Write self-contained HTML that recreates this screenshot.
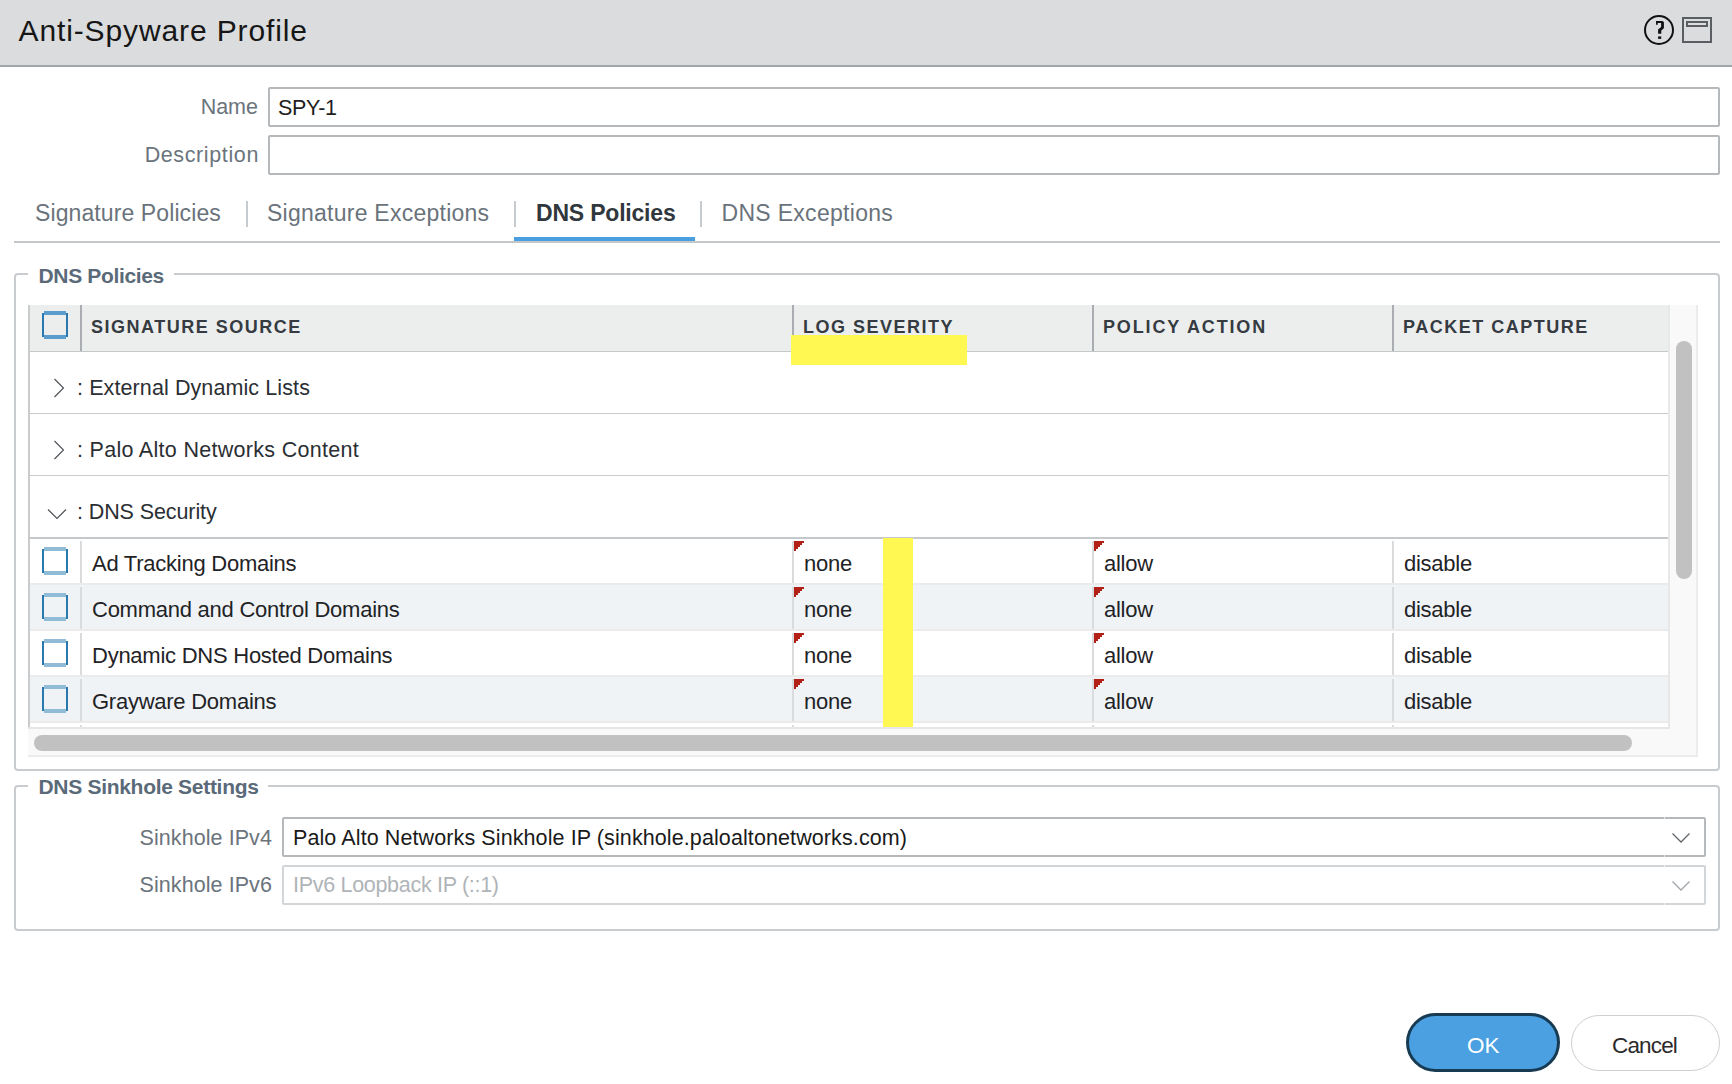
<!DOCTYPE html>
<html><head><meta charset="utf-8"><title>Anti-Spyware Profile</title>
<style>
html,body{margin:0;padding:0;background:#fff;width:1732px;height:1084px;overflow:hidden;}
body{position:relative;font-family:"Liberation Sans",sans-serif;}
.t{position:absolute;white-space:pre;}
.r{position:absolute;}
</style></head><body>
<div class="r" style="left:0px;top:0px;width:1732px;height:65px;background:#dbdcde;"></div>
<div class="r" style="left:0px;top:65px;width:1732px;height:2px;background:#a1a5a8;"></div>
<div class="t" style="left:18.5px;top:15.60px;font-size:30px;line-height:30px;color:#161616;font-weight:400;letter-spacing:0.88px;">Anti-Spyware Profile</div>
<svg class="r" style="left:1640px;top:10px" width="80" height="40" viewBox="1640 10 80 40">
<circle cx="1659" cy="30" r="14" fill="none" stroke="#111" stroke-width="2"/>
<path d="M1656 21 H1662.6 L1663.9 22.3 V28.2 L1661.3 30.6 V33.7 H1658.1 V29.4 L1661.1 26.9 V23.1 H1657.7 V24.7 H1656 Z" fill="#111"/>
<rect x="1658.1" y="36.4" width="3.1" height="2.5" fill="#111"/>
<rect x="1683" y="18" width="28" height="24" fill="none" stroke="#5a5e62" stroke-width="2"/>
<rect x="1687" y="22" width="20" height="4" fill="none" stroke="#5a5e62" stroke-width="2"/>
</svg>
<div class="t" style="right:1474px;text-align:right;top:97.30px;font-size:21.5px;line-height:21.5px;color:#6b747c;font-weight:400;letter-spacing:0px;">Name</div>
<div class="r" style="left:268px;top:87px;width:1452px;height:40px;border:2px solid #b5b9bc;border-radius:2px;box-sizing:border-box;"></div>
<div class="t" style="left:278px;top:98.10px;font-size:21.5px;line-height:21.5px;color:#1e1e1e;font-weight:400;letter-spacing:-0.3px;">SPY-1</div>
<div class="t" style="right:1473px;text-align:right;top:145.30px;font-size:21.5px;line-height:21.5px;color:#6b747c;font-weight:400;letter-spacing:0.62px;">Description</div>
<div class="r" style="left:268px;top:135px;width:1452px;height:40px;border:2px solid #b5b9bc;border-radius:2px;box-sizing:border-box;"></div>
<div class="t" style="left:35px;top:201.73px;font-size:23px;line-height:23px;color:#6a737b;font-weight:400;letter-spacing:0.1px;">Signature Policies</div>
<div class="r" style="left:246px;top:201px;width:2px;height:26px;background:#c6cbcf;"></div>
<div class="t" style="left:267px;top:201.73px;font-size:23px;line-height:23px;color:#6a737b;font-weight:400;letter-spacing:0.25px;">Signature Exceptions</div>
<div class="r" style="left:514px;top:201px;width:2px;height:26px;background:#c6cbcf;"></div>
<div class="t" style="left:536px;top:201.73px;font-size:23px;line-height:23px;color:#30373d;font-weight:700;letter-spacing:-0.2px;">DNS Policies</div>
<div class="r" style="left:700px;top:201px;width:2px;height:26px;background:#c6cbcf;"></div>
<div class="t" style="left:721.5px;top:201.73px;font-size:23px;line-height:23px;color:#6a737b;font-weight:400;letter-spacing:0.3px;">DNS Exceptions</div>
<div class="r" style="left:14px;top:241px;width:1706px;height:2px;background:#c4c7ca;"></div>
<div class="r" style="left:514px;top:237px;width:181px;height:4px;background:#4a9fe0;"></div>
<div class="r" style="left:14px;top:273px;width:1706px;height:498px;border:2px solid #c9cccf;border-radius:4px;box-sizing:border-box;"></div>
<div class="r" style="left:28px;top:272px;width:146px;height:4px;background:#fff;"></div>
<div class="t" style="left:38.5px;top:265.22px;font-size:21px;line-height:21px;color:#5a6a79;font-weight:700;letter-spacing:-0.35px;">DNS Policies</div>
<div class="r" style="left:28px;top:305px;width:1670px;height:452px;background:#f9f9f9;border-right:2px solid #ececec;border-bottom:2px solid #ebebeb;box-sizing:border-box;"></div>
<div class="r" style="left:29px;top:305px;width:1640px;height:46px;background:#eceeee;"></div>
<div class="r" style="left:29px;top:351px;width:1640px;height:2px;background:#c6c9cc;"></div>
<div class="r" style="left:28px;top:305px;width:2px;height:422px;background:#c9cbcd;"></div>
<div class="r" style="left:80px;top:305px;width:2px;height:46px;background:#a9adb1;"></div>
<div class="r" style="left:792px;top:305px;width:2px;height:46px;background:#a9adb1;"></div>
<div class="r" style="left:1092px;top:305px;width:2px;height:46px;background:#a9adb1;"></div>
<div class="r" style="left:1392px;top:305px;width:2px;height:46px;background:#a9adb1;"></div>
<div class="r" style="left:42px;top:312.5px;width:2px;height:24.0px;background:#2a78b0;"></div>
<div class="r" style="left:66px;top:312.5px;width:2px;height:24.0px;background:#2a78b0;"></div>
<div class="r" style="left:44px;top:311px;width:22px;height:4px;background:#5a9ccd;"></div>
<div class="r" style="left:44px;top:335px;width:22px;height:4px;background:#5a9ccd;"></div>
<div class="t" style="left:91px;top:317.56px;font-size:18px;line-height:18px;color:#353b41;font-weight:700;letter-spacing:1.5px;">SIGNATURE SOURCE</div>
<div class="t" style="left:803px;top:317.56px;font-size:18px;line-height:18px;color:#353b41;font-weight:700;letter-spacing:1.5px;">LOG SEVERITY</div>
<div class="t" style="left:1103px;top:317.56px;font-size:18px;line-height:18px;color:#353b41;font-weight:700;letter-spacing:1.85px;">POLICY ACTION</div>
<div class="t" style="left:1403px;top:317.56px;font-size:18px;line-height:18px;color:#353b41;font-weight:700;letter-spacing:1.5px;">PACKET CAPTURE</div>
<div class="r" style="left:30px;top:352px;width:1639px;height:61px;background:#fff;"></div>
<div class="r" style="left:29px;top:413px;width:1640px;height:2px;background:#c9ccce;"></div>
<svg class="r" style="left:50px;top:376px" width="20" height="22"><path d="M4.5 3 L13.5 12 L4.5 21" fill="none" stroke="#4a4f54" stroke-width="1.1"/></svg>
<div class="t" style="left:77px;top:378.10px;font-size:21.5px;line-height:21.5px;color:#2b2f33;font-weight:400;letter-spacing:0.1px;">: External Dynamic Lists</div>
<div class="r" style="left:30px;top:414px;width:1639px;height:61px;background:#fff;"></div>
<div class="r" style="left:29px;top:475px;width:1640px;height:2px;background:#c9ccce;"></div>
<svg class="r" style="left:50px;top:438px" width="20" height="22"><path d="M4.5 3 L13.5 12 L4.5 21" fill="none" stroke="#4a4f54" stroke-width="1.1"/></svg>
<div class="t" style="left:77px;top:440.10px;font-size:21.5px;line-height:21.5px;color:#2b2f33;font-weight:400;letter-spacing:0.3px;">: Palo Alto Networks Content</div>
<div class="r" style="left:30px;top:476px;width:1639px;height:61px;background:#fff;"></div>
<div class="r" style="left:29px;top:537px;width:1640px;height:2px;background:#c9ccce;"></div>
<svg class="r" style="left:45px;top:507px" width="24" height="16"><path d="M3 2.5 L12 11.5 L21 2.5" fill="none" stroke="#4a4f54" stroke-width="1.1"/></svg>
<div class="t" style="left:77px;top:502.10px;font-size:21.5px;line-height:21.5px;color:#2b2f33;font-weight:400;letter-spacing:-0.1px;">: DNS Security</div>
<div class="r" style="left:30px;top:539px;width:1638px;height:44px;background:#ffffff;"></div>
<div class="r" style="left:30px;top:583px;width:1638px;height:2px;background:#ebebeb;"></div>
<div class="r" style="left:80px;top:541px;width:2px;height:42px;background:#d9dbdd;"></div>
<div class="r" style="left:792px;top:541px;width:2px;height:42px;background:#d9dbdd;"></div>
<div class="r" style="left:1092px;top:541px;width:2px;height:42px;background:#d9dbdd;"></div>
<div class="r" style="left:1392px;top:541px;width:2px;height:42px;background:#d9dbdd;"></div>
<div class="r" style="left:42px;top:548.5px;width:2px;height:24.0px;background:#2a78b0;"></div>
<div class="r" style="left:66px;top:548.5px;width:2px;height:24.0px;background:#2a78b0;"></div>
<div class="r" style="left:44px;top:547px;width:22px;height:4px;background:#90bcd8;"></div>
<div class="r" style="left:44px;top:571px;width:22px;height:4px;background:#90bcd8;"></div>
<div class="t" style="left:92px;top:553.38px;font-size:22px;line-height:22px;color:#1f2326;font-weight:400;letter-spacing:-0.25px;">Ad Tracking Domains</div>
<svg class="r" style="left:794px;top:541px" width="10" height="10"><path d="M0 0 H10 V2 H8 V4 H6 V6 H4 V8 H2 V10 H0 Z" fill="#b22016" shape-rendering="crispEdges"/></svg>
<div class="t" style="left:804px;top:553.38px;font-size:22px;line-height:22px;color:#1f2326;font-weight:400;letter-spacing:-0.25px;">none</div>
<svg class="r" style="left:1094px;top:541px" width="10" height="10"><path d="M0 0 H10 V2 H8 V4 H6 V6 H4 V8 H2 V10 H0 Z" fill="#b22016" shape-rendering="crispEdges"/></svg>
<div class="t" style="left:1104px;top:553.38px;font-size:22px;line-height:22px;color:#1f2326;font-weight:400;letter-spacing:-0.25px;">allow</div>
<div class="t" style="left:1404px;top:553.38px;font-size:22px;line-height:22px;color:#1f2326;font-weight:400;letter-spacing:-0.25px;">disable</div>
<div class="r" style="left:30px;top:585px;width:1638px;height:44px;background:#eff3f6;"></div>
<div class="r" style="left:30px;top:629px;width:1638px;height:2px;background:#ebebeb;"></div>
<div class="r" style="left:80px;top:587px;width:2px;height:42px;background:#d9dbdd;"></div>
<div class="r" style="left:792px;top:587px;width:2px;height:42px;background:#d9dbdd;"></div>
<div class="r" style="left:1092px;top:587px;width:2px;height:42px;background:#d9dbdd;"></div>
<div class="r" style="left:1392px;top:587px;width:2px;height:42px;background:#d9dbdd;"></div>
<div class="r" style="left:42px;top:594.5px;width:2px;height:24.0px;background:#2a78b0;"></div>
<div class="r" style="left:66px;top:594.5px;width:2px;height:24.0px;background:#2a78b0;"></div>
<div class="r" style="left:44px;top:593px;width:22px;height:4px;background:#90bcd8;"></div>
<div class="r" style="left:44px;top:617px;width:22px;height:4px;background:#90bcd8;"></div>
<div class="t" style="left:92px;top:599.38px;font-size:22px;line-height:22px;color:#1f2326;font-weight:400;letter-spacing:-0.25px;">Command and Control Domains</div>
<svg class="r" style="left:794px;top:587px" width="10" height="10"><path d="M0 0 H10 V2 H8 V4 H6 V6 H4 V8 H2 V10 H0 Z" fill="#b22016" shape-rendering="crispEdges"/></svg>
<div class="t" style="left:804px;top:599.38px;font-size:22px;line-height:22px;color:#1f2326;font-weight:400;letter-spacing:-0.25px;">none</div>
<svg class="r" style="left:1094px;top:587px" width="10" height="10"><path d="M0 0 H10 V2 H8 V4 H6 V6 H4 V8 H2 V10 H0 Z" fill="#b22016" shape-rendering="crispEdges"/></svg>
<div class="t" style="left:1104px;top:599.38px;font-size:22px;line-height:22px;color:#1f2326;font-weight:400;letter-spacing:-0.25px;">allow</div>
<div class="t" style="left:1404px;top:599.38px;font-size:22px;line-height:22px;color:#1f2326;font-weight:400;letter-spacing:-0.25px;">disable</div>
<div class="r" style="left:30px;top:631px;width:1638px;height:44px;background:#ffffff;"></div>
<div class="r" style="left:30px;top:675px;width:1638px;height:2px;background:#ebebeb;"></div>
<div class="r" style="left:80px;top:633px;width:2px;height:42px;background:#d9dbdd;"></div>
<div class="r" style="left:792px;top:633px;width:2px;height:42px;background:#d9dbdd;"></div>
<div class="r" style="left:1092px;top:633px;width:2px;height:42px;background:#d9dbdd;"></div>
<div class="r" style="left:1392px;top:633px;width:2px;height:42px;background:#d9dbdd;"></div>
<div class="r" style="left:42px;top:640.5px;width:2px;height:24.0px;background:#2a78b0;"></div>
<div class="r" style="left:66px;top:640.5px;width:2px;height:24.0px;background:#2a78b0;"></div>
<div class="r" style="left:44px;top:639px;width:22px;height:4px;background:#90bcd8;"></div>
<div class="r" style="left:44px;top:663px;width:22px;height:4px;background:#90bcd8;"></div>
<div class="t" style="left:92px;top:645.38px;font-size:22px;line-height:22px;color:#1f2326;font-weight:400;letter-spacing:-0.25px;">Dynamic DNS Hosted Domains</div>
<svg class="r" style="left:794px;top:633px" width="10" height="10"><path d="M0 0 H10 V2 H8 V4 H6 V6 H4 V8 H2 V10 H0 Z" fill="#b22016" shape-rendering="crispEdges"/></svg>
<div class="t" style="left:804px;top:645.38px;font-size:22px;line-height:22px;color:#1f2326;font-weight:400;letter-spacing:-0.25px;">none</div>
<svg class="r" style="left:1094px;top:633px" width="10" height="10"><path d="M0 0 H10 V2 H8 V4 H6 V6 H4 V8 H2 V10 H0 Z" fill="#b22016" shape-rendering="crispEdges"/></svg>
<div class="t" style="left:1104px;top:645.38px;font-size:22px;line-height:22px;color:#1f2326;font-weight:400;letter-spacing:-0.25px;">allow</div>
<div class="t" style="left:1404px;top:645.38px;font-size:22px;line-height:22px;color:#1f2326;font-weight:400;letter-spacing:-0.25px;">disable</div>
<div class="r" style="left:30px;top:677px;width:1638px;height:44px;background:#eff3f6;"></div>
<div class="r" style="left:30px;top:721px;width:1638px;height:2px;background:#ebebeb;"></div>
<div class="r" style="left:80px;top:679px;width:2px;height:42px;background:#d9dbdd;"></div>
<div class="r" style="left:792px;top:679px;width:2px;height:42px;background:#d9dbdd;"></div>
<div class="r" style="left:1092px;top:679px;width:2px;height:42px;background:#d9dbdd;"></div>
<div class="r" style="left:1392px;top:679px;width:2px;height:42px;background:#d9dbdd;"></div>
<div class="r" style="left:42px;top:686.5px;width:2px;height:24.0px;background:#2a78b0;"></div>
<div class="r" style="left:66px;top:686.5px;width:2px;height:24.0px;background:#2a78b0;"></div>
<div class="r" style="left:44px;top:685px;width:22px;height:4px;background:#90bcd8;"></div>
<div class="r" style="left:44px;top:709px;width:22px;height:4px;background:#90bcd8;"></div>
<div class="t" style="left:92px;top:691.38px;font-size:22px;line-height:22px;color:#1f2326;font-weight:400;letter-spacing:-0.25px;">Grayware Domains</div>
<svg class="r" style="left:794px;top:679px" width="10" height="10"><path d="M0 0 H10 V2 H8 V4 H6 V6 H4 V8 H2 V10 H0 Z" fill="#b22016" shape-rendering="crispEdges"/></svg>
<div class="t" style="left:804px;top:691.38px;font-size:22px;line-height:22px;color:#1f2326;font-weight:400;letter-spacing:-0.25px;">none</div>
<svg class="r" style="left:1094px;top:679px" width="10" height="10"><path d="M0 0 H10 V2 H8 V4 H6 V6 H4 V8 H2 V10 H0 Z" fill="#b22016" shape-rendering="crispEdges"/></svg>
<div class="t" style="left:1104px;top:691.38px;font-size:22px;line-height:22px;color:#1f2326;font-weight:400;letter-spacing:-0.25px;">allow</div>
<div class="t" style="left:1404px;top:691.38px;font-size:22px;line-height:22px;color:#1f2326;font-weight:400;letter-spacing:-0.25px;">disable</div>
<div class="r" style="left:30px;top:723px;width:1638px;height:4px;background:#fff;"></div>
<div class="r" style="left:80px;top:725px;width:2px;height:2px;background:#d9dbdd;"></div>
<div class="r" style="left:792px;top:725px;width:2px;height:2px;background:#d9dbdd;"></div>
<div class="r" style="left:1092px;top:725px;width:2px;height:2px;background:#d9dbdd;"></div>
<div class="r" style="left:1392px;top:725px;width:2px;height:2px;background:#d9dbdd;"></div>
<div class="r" style="left:29px;top:537px;width:1640px;height:2px;background:#c6c9cc;"></div>
<div class="r" style="left:1668px;top:305px;width:2px;height:424px;background:#e8e8e8;"></div>
<div class="r" style="left:28px;top:727px;width:1642px;height:2px;background:#e6e6e6;"></div>
<div class="r" style="left:1676px;top:341px;width:16px;height:238px;background:#c1c1c1;border-radius:8px;"></div>
<div class="r" style="left:34px;top:735px;width:1598px;height:16px;background:#c1c1c1;border-radius:8px;"></div>
<div class="r" style="left:791px;top:335px;width:176px;height:30px;background:#fff853;"></div>
<div class="r" style="left:883px;top:538px;width:30px;height:189px;background:#fff853;"></div>
<div class="r" style="left:14px;top:785px;width:1706px;height:146px;border:2px solid #c9cccf;border-radius:4px;box-sizing:border-box;"></div>
<div class="r" style="left:28px;top:784px;width:240px;height:4px;background:#fff;"></div>
<div class="t" style="left:38.5px;top:776.42px;font-size:21px;line-height:21px;color:#5a6a79;font-weight:700;letter-spacing:-0.3px;">DNS Sinkhole Settings</div>
<div class="t" style="right:1460px;text-align:right;top:827.80px;font-size:21.5px;line-height:21.5px;color:#6b747c;font-weight:400;letter-spacing:0.08px;">Sinkhole IPv4</div>
<div class="r" style="left:282px;top:817px;width:1424px;height:40px;border:2px solid #b5b9bc;border-radius:2px;box-sizing:border-box;"></div>
<div class="r" style="left:1664px;top:817px;width:1px;height:2px;background:#e0e2e4;"></div>
<div class="r" style="left:1664px;top:855px;width:1px;height:2px;background:#e0e2e4;"></div>
<svg class="r" style="left:1670px;top:830px" width="22" height="16"><path d="M2.5 3.5 L11 12 L19.5 3.5" fill="none" stroke="#5f676d" stroke-width="1.25"/></svg>
<div class="t" style="left:293px;top:827.80px;font-size:21.5px;line-height:21.5px;color:#1a1a1a;font-weight:400;letter-spacing:0.1px;">Palo Alto Networks Sinkhole IP (sinkhole.paloaltonetworks.com)</div>
<div class="t" style="right:1460px;text-align:right;top:874.80px;font-size:21.5px;line-height:21.5px;color:#6b747c;font-weight:400;letter-spacing:0.08px;">Sinkhole IPv6</div>
<div class="r" style="left:282px;top:865px;width:1424px;height:40px;border:2px solid #d3d6d8;border-radius:2px;box-sizing:border-box;"></div>
<div class="r" style="left:1664px;top:865px;width:1px;height:2px;background:#eceef0;"></div>
<div class="r" style="left:1664px;top:903px;width:1px;height:2px;background:#eceef0;"></div>
<svg class="r" style="left:1670px;top:878px" width="22" height="16"><path d="M2.5 3.5 L11 12 L19.5 3.5" fill="none" stroke="#a0a6ab" stroke-width="1.25"/></svg>
<div class="t" style="left:293px;top:874.80px;font-size:21.5px;line-height:21.5px;color:#afb4b8;font-weight:400;letter-spacing:-0.3px;">IPv6 Loopback IP (::1)</div>
<div class="r" style="left:1406px;top:1013px;width:154px;height:59px;background:#4aa0e0;border:3px solid #173b53;border-radius:30px;box-sizing:border-box;"></div>
<div class="t" style="left:1467px;top:1034.75px;font-size:22.5px;line-height:22.5px;color:#ffffff;font-weight:400;letter-spacing:0px;">OK</div>
<div class="r" style="left:1571px;top:1015px;width:149px;height:56px;background:#fff;border:1.5px solid #cfcfcf;border-radius:28px;box-sizing:border-box;"></div>
<div class="t" style="left:1612px;top:1034.75px;font-size:22.5px;line-height:22.5px;color:#2a2a2a;font-weight:400;letter-spacing:-0.85px;">Cancel</div>
</body></html>
